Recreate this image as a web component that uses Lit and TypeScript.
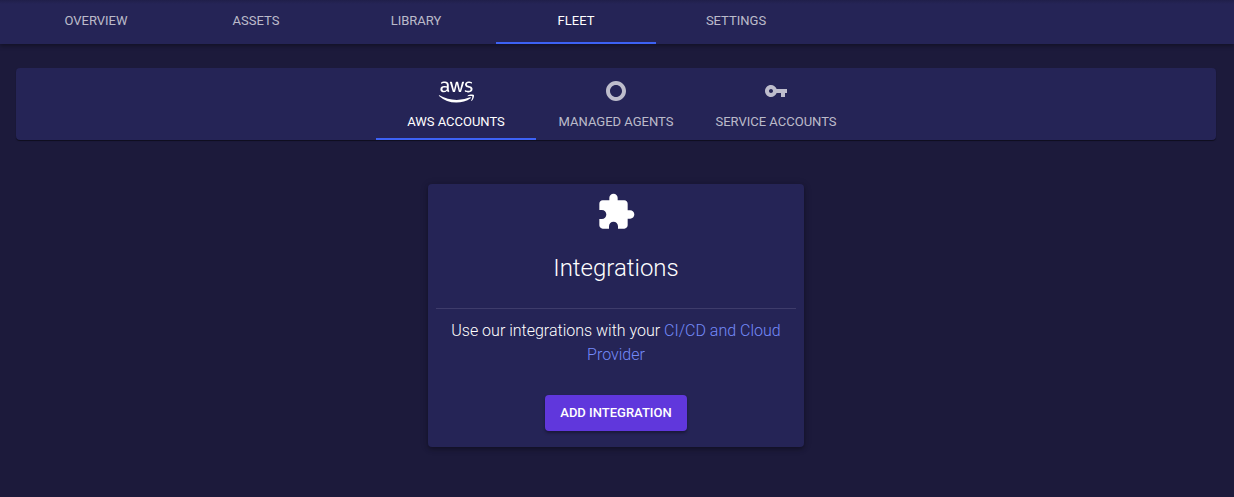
import { LitElement, html, css } from "lit";
import { customElement, property, state } from "lit/decorators.js";
import { classMap } from "lit/directives/class-map.js";

const icons: Record<string, unknown> = {
  aws: html`<svg class="icon aws" viewBox="-16 20 656 437" aria-hidden="true"><path d="M180.41 203.01c-.72 22.65 10.6 32.68 10.88 39.05a8.164 8.164 0 0 1-4.1 6.27l-12.8 8.96a10.66 10.66 0 0 1-5.63 1.92c-.43-.02-8.19 1.83-20.48-25.61a78.608 78.608 0 0 1-62.61 29.45c-16.28.89-60.4-9.24-58.13-56.21-1.59-38.28 34.06-62.06 70.93-60.05 7.1.02 21.6.37 46.99 6.27v-15.62c2.69-26.46-14.7-46.99-44.81-43.91-2.4.01-19.4-.5-45.84 10.11-7.36 3.38-8.3 2.82-10.75 2.82-7.41 0-4.36-21.48-2.94-24.2 5.21-6.4 35.86-18.35 65.94-18.18a76.857 76.857 0 0 1 55.69 17.28 70.285 70.285 0 0 1 17.67 52.36l-.01 69.29zM93.99 235.4c32.43-.47 46.16-19.97 49.29-30.47 2.46-10.05 2.05-16.41 2.05-27.4-9.67-2.32-23.59-4.85-39.56-4.87-15.15-1.14-42.82 5.63-41.74 32.26-1.24 16.79 11.12 31.4 29.96 30.48zm170.92 23.05c-7.86.72-11.52-4.86-12.68-10.37l-49.8-164.65c-.97-2.78-1.61-5.65-1.92-8.58a4.61 4.61 0 0 1 3.86-5.25c.24-.04-2.13 0 22.25 0 8.78-.88 11.64 6.03 12.55 10.37l35.72 140.83 33.16-140.83c.53-3.22 2.94-11.07 12.8-10.24h17.16c2.17-.18 11.11-.5 12.68 10.37l33.42 142.63L420.98 80.1c.48-2.18 2.72-11.37 12.68-10.37h19.72c.85-.13 6.15-.81 5.25 8.58-.43 1.85 3.41-10.66-52.75 169.9-1.15 5.51-4.82 11.09-12.68 10.37h-18.69c-10.94 1.15-12.51-9.66-12.68-10.75L328.67 110.7l-32.78 136.99c-.16 1.09-1.73 11.9-12.68 10.75h-18.3zm273.48 5.63c-5.88.01-33.92-.3-57.36-12.29a12.802 12.802 0 0 1-7.81-11.91v-10.75c0-8.45 6.2-6.9 8.83-5.89 10.04 4.06 16.48 7.14 28.81 9.6 36.65 7.53 52.77-2.3 56.72-4.48 13.15-7.81 14.19-25.68 5.25-34.95-10.48-8.79-15.48-9.12-53.13-21-4.64-1.29-43.7-13.61-43.79-52.36-.61-28.24 25.05-56.18 69.52-55.95 12.67-.01 46.43 4.13 55.57 15.62 1.35 2.09 2.02 4.55 1.92 7.04v10.11c0 4.44-1.62 6.66-4.87 6.66-7.71-.86-21.39-11.17-49.16-10.75-6.89-.36-39.89.91-38.41 24.97-.43 18.96 26.61 26.07 29.7 26.89 36.46 10.97 48.65 12.79 63.12 29.58 17.14 22.25 7.9 48.3 4.35 55.44-19.08 37.49-68.42 34.44-69.26 34.42zm40.2 104.86c-70.03 51.72-171.69 79.25-258.49 79.25A469.127 469.127 0 0 1 2.83 327.46c-6.53-5.89-.77-13.96 7.17-9.47a637.37 637.37 0 0 0 316.88 84.12 630.22 630.22 0 0 0 241.59-49.55c11.78-5 21.77 7.8 10.12 16.38zm29.19-33.29c-8.96-11.52-59.28-5.38-81.81-2.69-6.79.77-7.94-5.12-1.79-9.47 40.07-28.17 105.88-20.1 113.44-10.63 7.55 9.47-2.05 75.41-39.56 106.91-5.76 4.87-11.27 2.3-8.71-4.1 8.44-21.25 27.39-68.49 18.43-80.02z"/></svg>`,
  ring: html`<svg class="icon" viewBox="0 0 24 24" aria-hidden="true"><path d="M2 12C2 6.480 6.480 2 12 2s10 4.480 10 10-4.480 10-10 10S2 17.520 2 12zm10 6c3.310 0 6-2.690 6-6s-2.690-6-6-6-6 2.690-6 6 2.690 6 6 6z"/></svg>`,
  key: html`<svg class="icon" viewBox="0 0 24 24" aria-hidden="true"><path d="M12.650 10C11.830 7.670 9.610 6 7 6c-3.310 0-6 2.690-6 6s2.690 6 6 6c2.610 0 4.830-1.670 5.650-4H17v4h4v-4h2v-4H12.650zM7 14c-1.100 0-2-.9-2-2s.9-2 2-2 2 .9 2 2-.9 2-2 2z"/></svg>`,
  puzzle: html`<svg class="puzzle" viewBox="0 0 24 24" aria-hidden="true"><path d="M20.500 11H19V7c0-1.100-.9-2-2-2h-4V3.500C13 2.120 11.880 1 10.500 1S8 2.120 8 3.500V5H4c-1.100 0-1.990.9-1.990 2v3.800H3.500c1.490 0 2.700 1.210 2.700 2.700s-1.210 2.700-2.700 2.700H2V20c0 1.100.9 2 2 2h3.800v-1.500c0-1.490 1.210-2.700 2.700-2.700 1.490 0 2.700 1.210 2.700 2.700V22H17c1.100 0 2-.9 2-2v-4h1.500c1.380 0 2.500-1.120 2.500-2.500S21.880 11 20.500 11z"/></svg>`,
};

interface TabItem {
  label: string;
  icon?: string;
}

@customElement("tab-strip")
export class TabStrip extends LitElement {
  @property({ attribute: false }) items: TabItem[] = [];
  @property({ type: Number }) selected = 0;
  @property() label = "";

  static styles = css`
    :host {
      display: block;
    }
    .list {
      display: flex;
      justify-content: var(--tab-justify, flex-start);
    }
    .tab {
      box-sizing: border-box;
      flex: 0 1 160px;
      display: flex;
      flex-direction: column;
      align-items: center;
      gap: 7px;
      margin: 0;
      padding: var(--tab-padding, 9px 0);
      border: 0;
      border-bottom: 2px solid transparent;
      background: none;
      color: rgba(255, 255, 255, 0.7);
      font: 400 13px/24px Roboto, "Liberation Sans", sans-serif;
      text-transform: uppercase;
      white-space: nowrap;
      cursor: pointer;
    }
    .tab.active {
      color: #fff;
      border-bottom-color: #3d62f5;
    }
    .icon {
      width: 24px;
      height: 24px;
      fill: currentColor;
    }
    .icon.aws {
      width: 36px;
    }
  `;

  render() {
    return html`<div class="list" role="tablist" aria-label=${this.label}>
      ${this.items.map(
        (item, i) => html`<button
          class=${classMap({ tab: true, active: i === this.selected })}
          type="button"
          role="tab"
          aria-selected=${i === this.selected ? "true" : "false"}
          @click=${() => (this.selected = i)}
        >
          ${item.icon ? icons[item.icon] : null}<span>${item.label}</span>
        </button>`
      )}
    </div>`;
  }
}

@customElement("integration-card")
export class IntegrationCard extends LitElement {
  static styles = css`
    :host {
      display: block;
      width: 100%;
      max-width: 376px;
    }
    .card {
      display: flex;
      flex-direction: column;
      align-items: center;
      padding: 8px 8px 16px;
      border-radius: 4px;
      background: #252456;
      color: #fff;
      text-align: center;
      box-shadow: 0 2px 4px rgba(0, 0, 0, 0.3), 0 1px 8px rgba(0, 0, 0, 0.14);
    }
    .puzzle {
      width: 40px;
      height: 40px;
      fill: currentColor;
    }
    .title {
      margin: 20px 0 24px;
      font-size: 24px;
      line-height: 32px;
      font-weight: 300;
    }
    .rule {
      align-self: stretch;
      height: 1px;
      margin: 0;
      border: 0;
      background: #3e3c6b;
    }
    .text {
      margin: 10px 8px 28px;
      font-size: 16px;
      line-height: 24px;
      font-weight: 300;
    }
    .link {
      color: #748afa;
      text-decoration: none;
    }
    .action {
      height: 36px;
      padding: 0 15px;
      border: 0;
      border-radius: 4px;
      background: #6037dc;
      color: #fff;
      font: 500 13px/24px Roboto, "Liberation Sans", sans-serif;
      text-transform: uppercase;
      cursor: pointer;
      box-shadow: 0 2px 3px rgba(0, 0, 0, 0.35);
    }
  `;

  render() {
    return html`<section class="card">
      ${icons.puzzle}
      <h2 class="title">Integrations</h2>
      <hr class="rule" />
      <p class="text">
        Use our integrations with your
        <a class="link" href="#integrations">CI/CD and Cloud Provider</a>
      </p>
      <button class="action" type="button">Add integration</button>
    </section>`;
  }
}

@customElement("app-root")
export class AppRoot extends LitElement {
  @state() private sections: TabItem[] = [
    { label: "Overview" },
    { label: "Assets" },
    { label: "Library" },
    { label: "Fleet" },
    { label: "Settings" },
  ];

  @state() private fleet: TabItem[] = [
    { label: "AWS Accounts", icon: "aws" },
    { label: "Managed Agents", icon: "ring" },
    { label: "Service Accounts", icon: "key" },
  ];

  static styles = css`
    :host {
      display: block;
      box-sizing: border-box;
      min-height: 100vh;
      background: #1c1a3b;
      font-family: Roboto, "Liberation Sans", sans-serif;
    }
    .top {
      padding: 0 16px;
      background: linear-gradient(#201f4a, #252456 4px);
      box-shadow: 0 2px 4px rgba(0, 0, 0, 0.35);
    }
    .main {
      display: flex;
      flex-direction: column;
      align-items: center;
      gap: 44px;
      padding: 24px 18px 48px 16px;
    }
    .panel {
      align-self: stretch;
      border-radius: 4px;
      background: #252456;
      box-shadow: 0 1px 1px rgba(0, 0, 0, 0.5);
      --tab-justify: center;
      --tab-padding: 11px 0 4px;
    }
  `;

  render() {
    return html`
      <header class="top">
        <tab-strip label="Sections" .items=${this.sections} .selected=${3}></tab-strip>
      </header>
      <main class="main">
        <tab-strip class="panel" label="Fleet" .items=${this.fleet} .selected=${0}></tab-strip>
        <integration-card></integration-card>
      </main>
    `;
  }
}
